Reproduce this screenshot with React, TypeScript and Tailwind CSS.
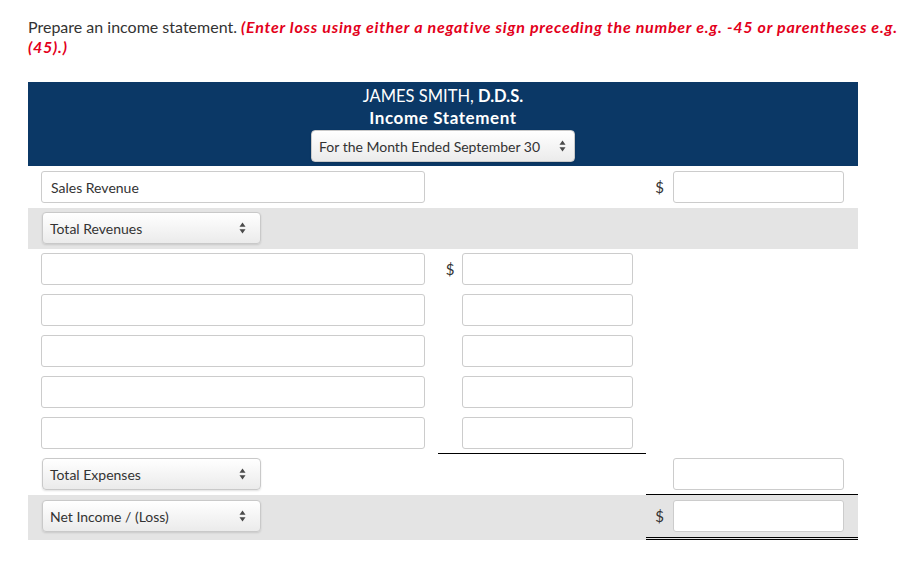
import React from 'react';

const font = { fontFamily: 'Lato, "Open Sans", sans-serif' };

const Arrows: React.FC<{ className?: string }> = ({ className }) => (
  <svg width="7" height="12" viewBox="0 0 7 12" className={className}>
    <path d="M3.5 0.5 L6.5 4.8 L0.5 4.8 Z" fill="#4a4a4a" />
    <path d="M3.5 11.5 L6.5 7.2 L0.5 7.2 Z" fill="#4a4a4a" />
  </svg>
);

const Select: React.FC<{ label: string; className?: string; arrowClass?: string }> = ({
  label,
  className = '',
  arrowClass = 'right-[14px]',
}) => (
  <div
    className={`relative h-[32px] flex items-center rounded-[4px] border border-[#c9c9c9] bg-gradient-to-b from-white to-[#ebebeb] shadow-[0_1px_2px_rgba(0,0,0,0.12)] text-[14px] text-[#333] ${className}`}
  >
    <span className="pl-[7px]">{label}</span>
    <Arrows className={`absolute top-1/2 -translate-y-1/2 ${arrowClass}`} />
  </div>
);

const Input: React.FC<{ value?: string; className?: string }> = ({ value, className = '' }) => (
  <div
    className={`h-[32px] flex items-center rounded-[3px] border border-[#cccccc] bg-white text-[14px] text-[#333] ${className}`}
  >
    {value && <span className="pl-[9px]">{value}</span>}
  </div>
);

const Dollar: React.FC = () => <span className="text-[15px] text-[#333] leading-none">$</span>;

export default function App() {
  const expenseRows = [0, 1, 2, 3, 4];

  return (
    <div className="bg-white w-[903px] h-[567px] pt-[17px] px-[28px]" style={font}>
      <p className="text-[16px] leading-[20px] text-[#333] w-[870px]">
        Prepare an income statement.{' '}
        <span className="font-bold italic text-[#e3001b] tracking-[0.75px]">
          (Enter loss using either a negative sign preceding the number e.g. -45 or parentheses e.g. (45).)
        </span>
      </p>

      <div className="mt-[25px] w-[830px]">
        {/* header */}
        <div className="bg-[#0b3866] h-[84px] pt-[4px] flex flex-col items-center text-white">
          <div className="text-[16.5px] leading-[21px]">
            JAMES SMITH, <span className="font-bold">D.D.S.</span>
          </div>
          <div className="text-[17px] leading-[22px] font-bold tracking-[0.6px]">Income Statement</div>
          <Select
            label="For the Month Ended September 30"
            className="w-[264px] mt-[1px]"
            arrowClass="right-[8px]"
          />
        </div>

        {/* Sales revenue */}
        <div className="flex h-[42px] pt-[5px]">
          <div className="w-[410px] pl-[13px]">
            <Input value="Sales Revenue" className="w-[384px]" />
          </div>
          <div className="w-[208px]" />
          <div className="w-[212px] flex">
            <div className="w-[27px] h-[32px] flex items-center justify-center">
              <Dollar />
            </div>
            <Input className="w-[171px]" />
          </div>
        </div>

        {/* Total revenues */}
        <div className="flex h-[41px] pt-[4px] bg-[#e4e4e4]">
          <div className="w-[410px] pl-[14px]">
            <Select label="Total Revenues" className="w-[219px]" />
          </div>
        </div>

        {/* expenses */}
        {expenseRows.map((i) => (
          <div key={i} className="flex h-[41px] pt-[4px]">
            <div className="w-[410px] pl-[13px]">
              <Input className="w-[384px]" />
            </div>
            <div
              className={`w-[208px] flex ${i === expenseRows.length - 1 ? 'border-b border-black h-[37px]' : ''}`}
            >
              <div className="w-[24px] h-[32px] flex items-center justify-center">
                {i === 0 && <Dollar />}
              </div>
              <Input className="w-[171px]" />
            </div>
          </div>
        ))}

        {/* total expenses */}
        <div className="flex h-[41px] pt-[4px]">
          <div className="w-[410px] pl-[14px]">
            <Select label="Total Expenses" className="w-[219px]" />
          </div>
          <div className="w-[208px]" />
          <div className="w-[212px] pl-[27px] border-b border-black h-[37px]">
            <Input className="w-[171px]" />
          </div>
        </div>

        {/* net income */}
        <div className="flex h-[45px] bg-[#e4e4e4]">
          <div className="w-[410px] pl-[14px] pt-[5px]">
            <Select label="Net Income / (Loss)" className="w-[219px]" />
          </div>
          <div className="w-[208px]" />
          <div className="w-[212px] flex pt-[5px] border-b-[3px] border-double border-black h-[45px]">
            <div className="w-[27px] h-[32px] flex items-center justify-center">
              <Dollar />
            </div>
            <Input className="w-[171px]" />
          </div>
        </div>
      </div>
    </div>
  );
}
